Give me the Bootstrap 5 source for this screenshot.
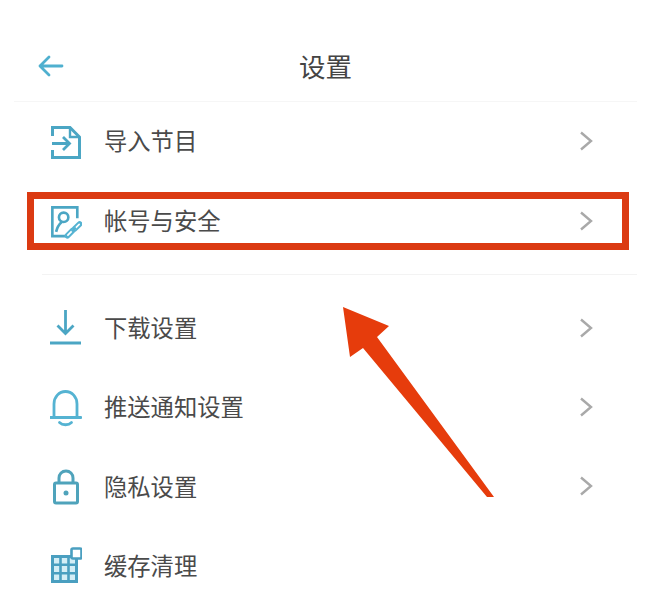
<!DOCTYPE html>
<html lang="zh-CN">
<head>
<meta charset="utf-8">
<title>设置</title>
<link rel="stylesheet" href="https://cdn.jsdelivr.net/npm/bootstrap@5.3.0/dist/css/bootstrap.min.css">
<style>
html,body{height:613px;overflow:hidden;background:#fff}
body{font-family:"Liberation Sans","Noto Sans CJK SC",sans-serif;color:#3c3c3c;position:relative}
.screen{width:660px;height:613px}
.top-bar{height:102px;margin:0 23px 0 14px;padding:32px 24px 0 24px;border-bottom:1px solid #f6f6f6;display:grid;grid-template-columns:1fr auto 1fr;align-items:center}
.top-title{font-size:26.500px;line-height:1;color:#444;padding-top:4px}
.back-btn{display:block;width:26px;height:22px;margin-top:-2px}
.set-list{background:transparent}
.set-row{height:80px;padding:0 67px 0 50px;border:0;background:transparent;color:#4a4a4a;font-size:23.300px;line-height:1}
.set-row.short{height:79.400px}
.row-ico{width:32px;height:38px;flex:none;margin-right:22px;margin-top:-1px}
.row-label{flex:1 1 auto;padding-top:2px}
.row-go{width:14px;height:22px;flex:none;margin-top:-2px}
.gap-rule{height:1px;background:#f3f3f3;margin:12px 23px 14px 42px}
.mark-box{position:absolute;left:27px;top:192px;width:602px;height:58px;border:7px solid #db3a12;pointer-events:none}
.mark-arrow{position:absolute;left:0;top:0;width:660px;height:613px;pointer-events:none}
</style>
</head>
<body>
<div class="screen">
  <div class="top-bar">
    <svg class="back-btn" viewBox="0 0 26 22" fill="none" stroke="#4fb0cf" stroke-width="2.800" stroke-linecap="round" stroke-linejoin="round"><path d="M2 11H24M11 2L2 11L11 20"/></svg>
    <div class="top-title">设置</div>
    <span></span>
  </div>
  <div class="list-group list-group-flush set-list">
    <div class="list-group-item d-flex align-items-center set-row">
      <svg class="row-ico" viewBox="0 0 32 38" fill="none" stroke="#4ba6c4" stroke-width="3"><path d="M2.500 13V4.500H20L29.500 14V34.500H2.500V27"/><path d="M20 4.500V14H29.500" stroke-width="2.400"/><path d="M2 20.500H19M13 14L19.500 20.500L13 27" stroke-width="2.800"/></svg>
      <span class="row-label">导入节目</span>
      <svg class="row-go" viewBox="0 0 14 22" fill="none" stroke="#a9a9a9" stroke-width="2.400"><path d="M2 2.500L12 11L2 19.500"/></svg>
    </div>
    <div class="list-group-item d-flex align-items-center set-row">
      <svg class="row-ico" viewBox="0 0 34 38" fill="none" stroke="#4ba6c4" stroke-width="2.800"><path d="M17 34H2.500V3.500H29V15"/><circle cx="14.500" cy="14" r="5"/><path d="M6.500 29.500C7.500 25 9.500 21.500 12.500 19"/><path d="M18.500 33.500L24 28M26 26.500L31.500 21" stroke="#55b3d2" stroke-width="6" stroke-linecap="round"/><path d="M19 33L24 28M26.500 26L31 21.500" stroke="#fff" stroke-width="1.800" stroke-linecap="round"/><path d="M23 29L27.500 25" stroke="#55b3d2" stroke-width="2.400"/></svg>
      <span class="row-label">帐号与安全</span>
      <svg class="row-go" viewBox="0 0 14 22" fill="none" stroke="#a9a9a9" stroke-width="2.400"><path d="M2 2.500L12 11L2 19.500"/></svg>
    </div>
  </div>
  <div class="gap-rule"></div>
  <div class="list-group list-group-flush set-list">
    <div class="list-group-item d-flex align-items-center set-row short">
      <svg class="row-ico" viewBox="0 0 32 38" fill="none" stroke="#4ba6c4" stroke-width="2.800"><path d="M15.500 1V24M7.500 16.500L15.500 24.500L23.500 16.500"/><path d="M0 34H31" stroke-width="3"/></svg>
      <span class="row-label">下载设置</span>
      <svg class="row-go" viewBox="0 0 14 22" fill="none" stroke="#a9a9a9" stroke-width="2.400"><path d="M2 2.500L12 11L2 19.500"/></svg>
    </div>
    <div class="list-group-item d-flex align-items-center set-row short">
      <svg class="row-ico" viewBox="0 0 32 38" fill="none" stroke="#55b3d2" stroke-width="2.800" stroke-linecap="round"><path d="M4 28V15C4 8 9 2.500 15.500 2.500S27 8 27 15V28"/><path d="M0 28.500H31"/><path d="M9.500 33.500C12.500 36.500 18.500 36.500 21.500 33.500"/></svg>
      <span class="row-label">推送通知设置</span>
      <svg class="row-go" viewBox="0 0 14 22" fill="none" stroke="#a9a9a9" stroke-width="2.400"><path d="M2 2.500L12 11L2 19.500"/></svg>
    </div>
    <div class="list-group-item d-flex align-items-center set-row short">
      <svg class="row-ico" viewBox="0 0 32 38" fill="none" stroke="#4fa3bb" stroke-width="3"><rect x="4.500" y="15" width="23" height="20" rx="1.500"/><path d="M9 15V10C9 6 12 3 16 3S23 6 23 10V15"/><circle cx="16" cy="25" r="2.500" fill="#4fa3bb" stroke="none"/></svg>
      <span class="row-label">隐私设置</span>
      <svg class="row-go" viewBox="0 0 14 22" fill="none" stroke="#a9a9a9" stroke-width="2.400"><path d="M2 2.500L12 11L2 19.500"/></svg>
    </div>
    <div class="list-group-item d-flex align-items-center set-row short">
      <svg class="row-ico" viewBox="0 0 32 38" fill="none" stroke="#4a9fc0" stroke-width="3"><path d="M2.500 9.500H26.500V34.500H2.500Z" fill="#d4eef6"/><path d="M10.500 9V34M18.500 9V34M2 17.800H27M2 26.200H27" stroke-width="2.600"/><rect x="21.500" y="1.500" width="10" height="10" rx="1.500" fill="#fff" stroke-width="2.600"/></svg>
      <span class="row-label">缓存清理</span>
    </div>
  </div>
  <div class="mark-box"></div>
  <svg class="mark-arrow" viewBox="0 0 660 613"><path d="M343 307L389 326L377 337L494 497H487L363 348L350 357Z" fill="#e63c0c"/></svg>
</div>
<script src="https://cdn.jsdelivr.net/npm/bootstrap@5.3.0/dist/js/bootstrap.bundle.min.js"></script>
</body>
</html>
